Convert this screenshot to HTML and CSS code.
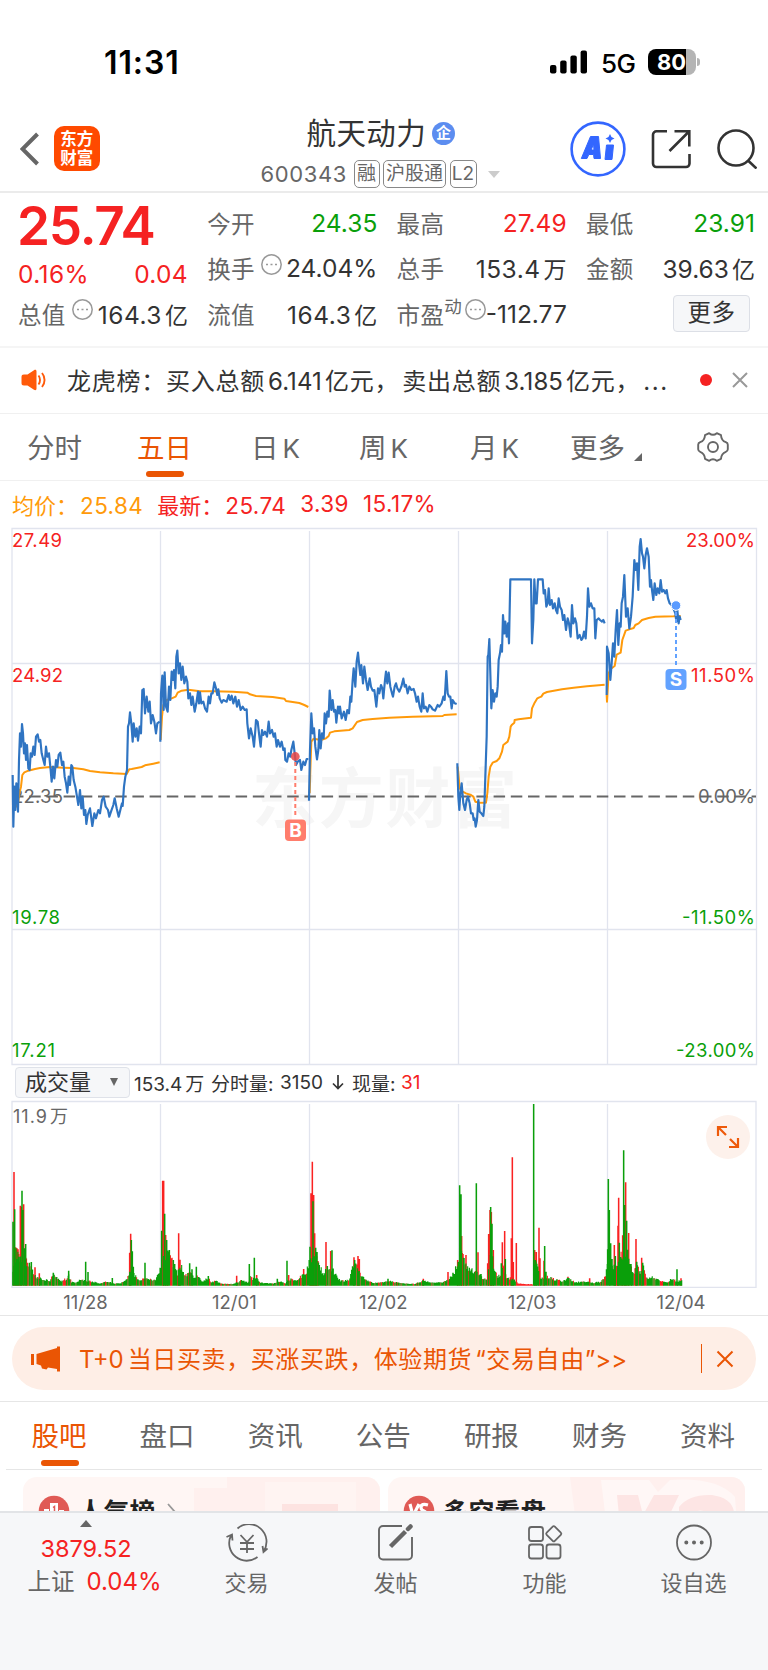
FILE: index.html
```
<!DOCTYPE html>
<html lang="zh-CN">
<head>
<meta charset="utf-8">
<title>航天动力 600343</title>
<link rel="stylesheet" href="styles.css">
</head>
<body>
<main class="screen">
  <div class="status">
    <span class="clock">11:31</span>
    <div class="status-right">
      <svg width="38" height="24" viewBox="0 0 38 24"><rect x="0" y="15" width="6.4" height="8.5" rx="2"/><rect x="10.2" y="10.5" width="6.4" height="13" rx="2"/><rect x="20.4" y="5.5" width="6.4" height="18" rx="2"/><rect x="30.6" y="0.5" width="6.4" height="23" rx="2"/></svg>
      <span class="net">5G</span>
      <div class="battery"><span>80</span></div><i class="nub"></i>
    </div>
  </div>

  <header class="header">
    <svg class="back" width="20" height="34" viewBox="0 0 20 34"><path d="M17.5 2 2.5 17l15 15" fill="none" stroke="#666" stroke-width="4"/></svg>
    <div class="logo"><span>东方</span><span>财富</span></div>
    <div class="heading">
      <div class="name">航天动力<span class="corp">企</span></div>
      <div class="code"><span class="num">600343</span><b class="tag t1">融</b><b class="tag t2">沪股通</b><b class="tag t3">L2</b><i class="caret"></i></div>
    </div>
    <div class="actions">
      <svg width="56" height="56" viewBox="0 0 56 56"><circle cx="28" cy="28" r="26.4" fill="none" stroke="#36f" stroke-width="2.6"/><path fill="#36f" stroke="#36f" stroke-width="1" stroke-linejoin="round" fill-rule="evenodd" d="M20.5 15.5h8l2 22h-6.500l-.4-4h-4.800l-1.800 4h-5.700zM23.500 23l-2.300 6h2.800zM36.500 24h7l-1.500 14.500h-7z"/><path fill="#36f" d="M40 13l1.500 3 3 1.500-3 1.500-1.500 3-1.500-3-3-1.500 3-1.500z"/></svg>
      <svg width="40" height="40" viewBox="0 0 40 40" fill="none" stroke="#333" stroke-width="2.600"><path d="M16 2.300H5.500a3.500 3.500 0 0 0-3.500 3.500V34.500a3.500 3.500 0 0 0 3.500 3.500H35a3.500 3.500 0 0 0 3.500-3.500V25M23.500 2.300H38.300V17.500M38 2.500 18.500 22"/></svg>
      <svg width="40" height="40" viewBox="0 0 40 40" fill="none" stroke="#333" stroke-width="2.600"><circle cx="19" cy="19" r="17.500"/><path d="M31 31.500l8.500 8"/></svg>
    </div>
  </header>

  <section class="quote">
    <div class="col c1">
      <div class="price">25.74</div>
      <div class="cell red pct"><span>0.16%</span><span>0.04</span></div>
      <div class="cell"><label>总值</label><svg class="dots" viewBox="0 0 21 21"><circle cx="10.500" cy="10.500" r="9.700"/><path d="M5 10.500h2M9.500 10.500h2M14 10.500h2"/></svg><span class="wide">164.3<u>亿</u></span></div>
    </div>
    <div class="col">
      <div class="cell"><label>今开</label><span class="green">24.35</span></div>
      <div class="cell"><label>换手</label><svg class="dots" viewBox="0 0 21 21"><circle cx="10.500" cy="10.500" r="9.700"/><path d="M5 10.500h2M9.500 10.500h2M14 10.500h2"/></svg><span>24.04%</span></div>
      <div class="cell"><label>流值</label><span class="wide">164.3<u>亿</u></span></div>
    </div>
    <div class="col">
      <div class="cell"><label>最高</label><span class="red">27.49</span></div>
      <div class="cell"><label>总手</label><span class="wide">153.4<u>万</u></span></div>
      <div class="cell"><label>市盈</label><sup>动</sup><svg class="dots" viewBox="0 0 21 21"><circle cx="10.500" cy="10.500" r="9.700"/><path d="M5 10.500h2M9.500 10.500h2M14 10.500h2"/></svg><span class="pe">-112.77</span></div>
    </div>
    <div class="col">
      <div class="cell"><label>最低</label><span class="green">23.91</span></div>
      <div class="cell"><label>金额</label><span>39.63<u>亿</u></span></div>
      <div class="cell"><button class="more">更多</button></div>
    </div>
  </section>

  <section class="news">
    <svg width="26" height="22" viewBox="0 0 26 22"><path fill="#ff5a0a" d="M3 5.500h3.500L13 1.200c1.500-.8 2.500-.3 2.500 1.300v17c0 1.600-1 2.100-2.500 1.300L6.500 16.500H3c-1.800 0-2.500-.8-2.500-2.500V8c0-1.700.7-2.500 2.500-2.500z"/><path d="M17.500 6.500c2 2.500 2 6.500 0 9M21 4c3.400 4 3.400 10 0 14" fill="none" stroke="#ff5a0a" stroke-width="1.900"/></svg>
    <p>龙虎榜：买入总额<u>6.141</u>亿元，<s></s>卖出总额<u>3.185</u>亿元，<em>...</em></p>
    <i class="dot"></i>
    <svg width="16" height="16" viewBox="0 0 16 16"><path d="M1 1l14 14M15 1 1 15" stroke="#999" stroke-width="2"/></svg>
  </section>

  <nav class="tabs">
    <a>分时</a><a class="on">五日</a><a>日<u>K</u></a><a>周<u>K</u></a><a>月<u>K</u></a><a>更多<i></i></a>
    <svg width="32" height="32" viewBox="0 0 32 32" fill="none" stroke="#666" stroke-width="1.900"><circle cx="16" cy="16" r="5"/><path stroke-linejoin="round" d="M12.200 2.200Q16 5.500 19.800 2.200L24 4.200Q24.300 9.500 28.800 11.200Q31 12 30.800 14V18Q31 20 28.800 20.800Q24.300 22.500 24 27.800L19.800 29.800Q16 26.500 12.200 29.800L8 27.800Q7.700 22.500 3.200 20.800Q1 20 1.200 18V14Q1 12 3.200 11.200Q7.700 9.500 8 4.200Z"/></svg>
  </nav>

  <div class="legend"><span class="avg">均价：<b>25.84</b></span><span>最新：<b>25.74</b></span><b>3.39</b><b>15.17%</b></div>

  <svg class="chart" width="768" height="540" viewBox="0 526 768 540">
    <text x="252" y="822" class="watermark" textLength="265">东方财富</text>
    <g class="grid"><path d="M12 528.500H756.500V1064.500H12zM12 663.500H756M12 929.500H756M160.500 531V1064M309.500 531V1064M458.500 531V1064M607.500 531V1064"/></g>
    <g class="axis">
      <text x="12" y="547" class="up" textLength="50">27.49</text>
      <text x="12" y="681.500" class="up" textLength="51">24.92</text>
      <text x="12" y="803" textLength="51">22.35</text>
      <text x="12" y="924" class="down" textLength="48">19.78</text>
      <text x="12" y="1057" class="down" textLength="43">17.21</text>
      <text x="686" y="547" class="up" textLength="69">23.00%</text>
      <text x="691" y="681.500" class="up" textLength="64">11.50%</text>
      <text x="698" y="803" textLength="57">0.00%</text>
      <text x="682" y="924" class="down" textLength="73">-11.50%</text>
      <text x="676" y="1057" class="down" textLength="79">-23.00%</text>
    </g>
    <path d="M12 796.400H756" stroke="#666" stroke-width="2" stroke-dasharray="11.500 5.700"/>
    <g transform="translate(0 520) scale(.33333)" fill="none" stroke-linejoin="round">
      <g stroke="#ff9a0a" stroke-width="6">
        <path d="M47 862 55 845 58 820 63 800 67 765 73 757 85 752 105 747 120 744 150 741 190 743 220 744 250 748 270 753 300 757 340 760 380 762 388 748 395 747 425 741 435 736 460 731 479 727"/>
        <path d="M482 660 486 590 490 555 500 540 515 535 527 530 533 518 545 512 565 509 600 514 640 514 700 515 742 518 750 523 768 528 818 531 853 536 858 543 898 549 913 555 925 561"/>
        <path transform="translate(768)" d="M161 820 163 750 166 665 173 656 195 660 210 655 218 648 222 638 235 634 280 630 290 625 303 606 320 600 350 597 400 593 470 590 560 588 565 585 602 583"/>
        <path transform="translate(768)" d="M605 740 607 760 611 805 620 815 630 820 645 825 652 830 658 845 670 848 690 848 694 820 698 770 703 740 710 728 722 723 730 715 738 695 742 675 755 665 760 650 764 620 768 614 775 608 776 600 788 598 825 593 828 565 836 548 844 535 850 532 856 530 862 521 873 516 918 508 953 503 993 499 1046 494"/>
        <path transform="translate(1536)" d="M284 525 285 545 290 460 295 448 308 438 314 404 326 398 331 360 341 332 352 328 365 324 370 315 380 310 390 300 410 294 430 290 485 289 506 288"/>
      </g>
      <g stroke="#2f74c2" stroke-width="6.500">
        <path d="M38 765 40 920 43 800 46 870 49 790 52 810 54 875 57 720 60 640 63 680 66 612 69 640 72 700 75 670 78 720 81 675 85 745 89 750 92 700 96 710 100 680 104 705 108 650 113 643 117 665 121 660 125 700 130 720 134 735 138 680 142 710 147 700 151 740 155 785 159 740 163 775 168 720 172 740 176 705 181 698 186 735 190 725 194 770 198 790 202 818 206 770 210 795 214 735 217 740 221 780 226 800 231 830 235 855 240 810 244 865 248 830 252 885 256 870 259 912 263 885 270 865 277 918 283 880 288 895 295 870 300 880 306 840 311 830 317 860 324 870 328 890 333 875 340 855 344 835 350 865 356 890 361 870 366 850 368 858 372 800 376 770 381 750 384 620 387 610 390 577 394 610 398 665 401 610 406 650 410 625 414 662 419 620 423 640 427 510 431 507 435 580 440 530 445 575 449 545 453 610 458 585 463 605 468 640 472 610 479 605"/>
        <path d="M481 665 483 520 487 467 491 570 494 457 498 560 503 575 507 500 511 540 515 455 519 480 522 450 526 505 529 410 532 392 536 460 540 430 544 480 548 440 553 490 558 470 562 485 565 535 570 520 574 555 578 530 584 575 589 550 594 515 597 550 600 517 604 550 610 545 615 565 621 575 626 530 630 550 634 520 638 520 643 487 648 505 652 525 655 508 659 535 665 548 670 540 680 545 686 525 690 540 695 527 700 550 706 530 711 560 716 540 722 570 728 560 734 570 740 568 742 610 747 655 752 625 758 650 762 680 766 630 768 600 773 605 777 640 782 680 786 630 790 645 795 635 801 650 806 605 810 640 816 630 821 650 825 640 830 680 834 660 840 680 845 665 850 690 854 685 856 720 861 725 866 700 871 710 874 690 880 665 884 700 888 735 893 725 900 720 904 750 910 725 915 735 920 717 925 717"/>
        <path transform="translate(768)" d="M159 842 162 690 166 580 170 640 174 625 178 680 183 718 187 690 190 630 194 685 198 640 203 655 206 580 210 610 214 575 218 590 221 512 226 570 230 540 234 575 238 570 241 608 246 560 250 580 252 560 257 595 264 575 269 600 274 570 279 580 283 530 286 545 290 480 293 445 298 500 302 425 306 398 310 440 313 465 316 435 321 490 325 440 330 480 335 510 341 475 345 500 350 512 355 510 361 560 366 505 370 520 375 495 379 505 382 535 387 480 390 455 394 490 398 458 403 500 408 520 411 530 416 500 420 490 424 505 430 515 436 500 442 476 446 500 450 495 455 520 460 500 466 510 473 507 477 520 482 545 486 530 491 560 496 575 500 520 504 565 509 560 514 575 520 555 525 560 530 568 537 572 545 555 550 560 557 550 562 530 566 540 571 453 575 520 579 530 583 530 587 565 590 540 596 550 602 552"/>
        <path transform="translate(768)" d="M604 730 607 830 610 870 613 820 617 790 622 850 627 870 632 840 636 830 641 850 645 880 650 880 653 900 656 895 659 920 663 900 667 840 671 875 676 880 682 888 685 860 688 770 692 650 695 410 697 405 700 357 703 460 706 565 710 510 714 545 718 520 722 530 725 500 728 420 732 400 735 375 738 395 741 285 745 340 748 305 752 350 756 310 759 370 763 178 825 178 828 370 832 300 835 178 839 250 842 250 846 178 860 178 863 220 867 210 871 260 875 250 878 205 882 255 887 240 891 265 896 250 900 270 904 280 908 235 912 260 917 270 921 300 925 285 930 330 935 295 939 310 944 350 948 255 952 310 957 295 961 310 965 355 971 345 976 360 980 355 984 335 989 355 993 290 996 205 1000 260 1005 250 1010 265 1015 265 1018 355 1022 300 1028 295 1032 300 1038 305 1042 300 1046 310"/>
        <path transform="translate(1536)" d="M284 525 285 380 290 400 295 480 299 430 303 370 307 410 311 330 315 270 319 375 323 310 326 320 329 250 333 230 337 165 342 290 347 265 352 325 357 290 362 230 367 120 371 150 375 130 379 210 383 80 386 57 390 100 393 110 397 145 401 105 405 85 410 110 414 200 417 180 420 210 424 240 428 190 433 225 437 205 442 220 446 180 450 215 455 210 460 220 464 210 468 235 473 250 478 255 484 265 490 280 493 305 496 270 500 310 503 290 506 300"/>
      </g>
    </g>
    <path d="M295.300 762V818" stroke="#ff7d6c" stroke-width="2" stroke-dasharray="4 3"/>
    <circle cx="295.300" cy="756.500" r="4.400" fill="#e84545" opacity=".85"/>
    <rect x="285" y="819.500" width="21" height="21.500" rx="4" fill="#ff7d6c"/>
    <text x="295.500" y="837" class="mark">B</text>
    <path d="M676 612V668" stroke="#62a2ff" stroke-width="2" stroke-dasharray="4 3"/>
    <circle cx="676" cy="605.500" r="4.800" fill="#5a9bff" stroke="#fff" stroke-width="1"/>
    <rect x="665.500" y="669" width="21" height="21" rx="4" fill="#62a2ff"/>
    <text x="676" y="686.200" class="mark">S</text>
  </svg>

  <div class="vol-head">
    <div class="select">成交量<i></i></div>
    <span class="v1">153.4<u>万</u></span><span class="v2">分时量:</span><span class="v3">3150</span><svg width="12" height="18" viewBox="0 0 12 18"><path d="M6 2v13.500M1 10.500l5 5 5-5" fill="none" stroke="#333" stroke-width="1.700"/></svg><span class="v4">现量:</span><span class="v5">31</span>
  </div>

  <div class="volume">
    <svg width="768" height="188" viewBox="0 1100 768 188">
      <g class="grid"><path d="M12 1101.500H756V1287.500H12zM160.500 1104V1286M309.500 1104V1286M458.500 1104V1286M607.500 1104V1286"/></g>
      <g id="bars"></g>
      <text x="13" y="1122.500" class="vmax" textLength="34">11.9</text><text x="50" y="1122.500" class="vmax">万</text>
    </svg>
    <div class="expand"><svg width="24" height="24" viewBox="0 0 24 24" fill="none" stroke="#ee5a0a" stroke-width="2.200"><path d="M2 11V2h9M2.500 2.500 10 10M22 13v9h-9M21.500 21.500 14 14"/></svg></div>
  </div>
  <div class="dates"><span>11/28</span><span>12/01</span><span>12/02</span><span>12/03</span><span>12/04</span></div>

  <div class="promo-wrap"><div class="promo">
    <svg width="30" height="26" viewBox="0 0 30 26"><path fill="#ea5504" d="M0 8h3v11H0zM5.500 8 26 2V.500h3v25h-3V23l-9-1.500-1.500 2-4.500-1-1-3-4.500-1.500z"/></svg>
    <p><u>T+0</u>当日买卖，买涨买跌，体验期货<q class="l">“</q>交易自由<q class="r">”&gt;&gt;</q></p>
    <i></i>
    <svg width="18" height="18" viewBox="0 0 18 18"><path d="M1.500 1.500l15 15M16.500 1.500l-15 15" stroke="#ea5504" stroke-width="2"/></svg>
  </div></div>

  <nav class="tabs2"><a class="on">股吧</a><a>盘口</a><a>资讯</a><a>公告</a><a>研报</a><a>财务</a><a>资料</a></nav>

  <section class="cards">
    <div class="card">
      <svg class="deco" width="357" height="60" viewBox="0 0 357 60"><path fill="#fff0ee" d="M171 11h33V0h153v60H171z"/><path fill="#fff4f2" d="M242 5h91v55h-91z"/><path fill="#fde3e1" d="M259 27h56v33h-56z"/></svg>
      <svg class="ico" width="32" height="32" viewBox="0 0 32 32"><circle cx="16" cy="16" r="15.300" fill="#e05a55"/><path fill="#fff" d="M12 8h8v16h-8zM6 14h5v10H6zM21 15h5v9h-5z"/><path d="M15 12.500l1.500-1v7" stroke="#e05a55" fill="none" stroke-width="1.500"/></svg>
      <strong>人气榜</strong>
      <svg class="chev" width="10" height="18" viewBox="0 0 10 18"><path d="M1 1l7 8-7 8" fill="none" stroke="#999" stroke-width="1.800"/></svg>
    </div>
    <div class="card">
      <svg class="deco" width="357" height="60" viewBox="0 0 357 60"><path fill="#fff0ee" d="M182 0H357V60H190z"/><path fill="#fff7f6" d="M213 3h48l9 12 12-12Q330 0 347 20L350 60H220z"/><path fill="#fde5e4" d="M229 18h21l5 20 11-20h25l-20 42H233zM291 30q10-13 33-12 20 3 22 17h-28q-8-4-11 2l8 20h-24z"/></svg>
      <svg class="ico" width="32" height="32" viewBox="0 0 32 32"><circle cx="16" cy="16" r="15.300" fill="#e05a55"/><path d="M7 9l3 12 6-12M25 10q-7-2-7 2.500 0 2.500 3 3.500t1 4.500q-2 1.500-6 0" fill="none" stroke="#fff" stroke-width="3.200"/></svg>
      <strong>多空看盘</strong>
    </div>
  </section>

  <footer class="bottom">
    <div class="index"><i></i><b>3879.52</b><div>上证<b>0.04%</b></div></div>
    <a><svg width="42" height="38" viewBox="0 0 42 38" fill="none" stroke="#666" stroke-width="1.800"><path d="M11.500 4.500A17.500 17.500 0 0 1 37.500 27.500M31.500 33A17.500 17.500 0 0 1 5 11.500M.500 13l5.500-2.500 .5 6M36.500 22l1 6 4-3.500M14.500 11l6.500 7 6.500-7M21 18v11M14 19h14M14 25h14"/></svg>交易</a>
    <a><svg width="38" height="38" viewBox="0 0 38 38" fill="none" stroke="#666" stroke-width="1.900"><path d="M25 2H6a4 4 0 0 0-4 4V31.500a4 4 0 0 0 4 4H31a4 4 0 0 0 4-4V13"/><path d="M13.500 22.500 28.500 7.500" stroke-width="4.500"/><path d="M31 5l2.500-2.500" stroke-width="4.500" stroke-linecap="round"/></svg>发帖</a>
    <a><svg width="38" height="38" viewBox="0 0 38 38" fill="none" stroke="#666" stroke-width="1.800"><rect x="3" y="3" width="14" height="14" rx="2.500"/><rect x="3" y="20.500" width="14" height="14" rx="2.500"/><rect x="20.500" y="20.500" width="14" height="14" rx="2.500"/><rect x="22" y="4" width="11.500" height="11.500" rx="1.500" transform="rotate(45 27.750 9.750)"/></svg>功能</a>
    <a><svg width="38" height="38" viewBox="0 0 38 38" fill="none" stroke="#666" stroke-width="1.800"><circle cx="19" cy="18.500" r="17"/><path d="M11.300 18.500h.01M19 18.500h.01M26.700 18.500h.01" stroke-width="4" stroke-linecap="round"/></svg>设自选</a>
  </footer>
</main>
<script src="volume.js"></script>
</body>
</html>
```
FILE: styles.css
```
* { box-sizing: border-box; }
body { margin: 0; background: #fff; }
u, i, em, q, s { text-decoration: none; font-style: normal; quotes: none; }
q::before, q::after { content: none; }
svg { display: block; flex: none; }
.screen { width: 768px; height: 1670px; overflow: hidden; display: flex; flex-direction: column; font-family: Inter, "Noto Sans CJK SC", sans-serif; font-weight: 400; color: #333; }
.screen > * { flex: none; }
.red { color: #f52222; }
.green { color: #0a9f0a; }

.status { height: 106px; display: flex; justify-content: space-between; padding: 18px 68px 0 104px; align-items: center; color: #000; }
.clock { font-size: 32px; font-weight: 600; letter-spacing: .9px; }
.status-right { display: flex; align-items: center; }
.net { font-size: 26px; margin: 2px 14px 0 13px; width: 33px; letter-spacing: -.6px; font-weight: 500; }
.battery { width: 48px; height: 26px; border-radius: 8px; background: linear-gradient(90deg, #000 38px, #b4b4b4 38px); color: #fff; font-size: 22px; font-weight: 700; line-height: 26px; padding-left: 9px; letter-spacing: 0; }
.nub { width: 3px; height: 8px; border-radius: 0 4px 4px 0; background: #b4b4b4; margin-left: 1px; }

.header { height: 87px; border-bottom: 2px solid #ebebeb; display: flex; align-items: center; padding: 0 12px 0 20px; }
.logo { width: 45.500px; height: 45.500px; margin-left: 14px; border-radius: 10px; background: #ff4a00; color: #fff; font-weight: 700; font-size: 16.500px; line-height: 19px; display: flex; flex-direction: column; align-items: center; justify-content: center; }
.heading { margin-left: 161px; width: 244px; align-self: stretch; padding-top: 5px; }
.name { display: flex; align-items: center; justify-content: flex-start; font-size: 29.500px; line-height: 44px; letter-spacing: .4px; padding-left: 46px; }
.corp { width: 23px; height: 23px; border-radius: 50%; background: #5c8df0; color: #fff; font-size: 15px; font-weight: 700; line-height: 22px; text-align: center; margin-left: 6px; letter-spacing: 0; }
.code { display: flex; align-items: center; color: #666; height: 28px; margin-top: 5px; }
.num { font-size: 22px; width: 93px; letter-spacing: .6px; }
.tag { border: 1.500px solid #888; border-radius: 5px; font-weight: 400; font-size: 19px; line-height: 25px; height: 28px; text-align: center; margin-right: 3.500px; white-space: nowrap; }
.t1 { width: 26px; } .t2 { width: 63px; } .t3 { width: 27px; font-size: 19px; }
.caret { border: 6.500px solid transparent; border-top: 7px solid #ccc; border-bottom: 0; margin-left: 8px; }
.actions { margin-left: auto; display: flex; align-items: center; }
.actions svg:nth-child(2) { margin-left: 25px; }
.actions svg:nth-child(3) { margin-left: 26px; margin-right: -1px; }

.quote { height: 155px; border-bottom: 2px solid #f5f5f5; padding: 7px 12px 0 18px; display: grid; grid-template-columns: 170px 170px 170px 169px; column-gap: 19.300px; }
.cell { height: 45.500px; display: flex; align-items: center; font-size: 24.500px; position: relative; white-space: nowrap; }
.cell label { font-size: 23.500px; color: #666; letter-spacing: .3px; }
.cell span { margin-left: auto; }
.cell .wide { letter-spacing: .5px; }
.cell u { font-size: 23px; margin-left: 3px; letter-spacing: 0; }
.dots { width: 21px; height: 21px; fill: none; stroke: #999; stroke-width: 1.500; margin: -8px 0 0 6px; }
.cell .pe { margin-right: 0; }
.price { font-size: 53px; font-weight: 600; color: #f52222; line-height: 53px; height: 54px; letter-spacing: -1.200px; margin-left: -1px; }
.c1 .pct { height: 37px; padding-top: 2px; }
.pct span:first-child { margin-left: 0; letter-spacing: .4px; }
.pct span:last-child { letter-spacing: .3px; }
.cell sup { font-size: 17.500px; color: #666; align-self: flex-start; line-height: 1; margin: 7px 0 0 0; }
.cell sup + .dots { margin-left: 3px; }
.more { margin: -1px 5px 0 auto; width: 77px; height: 37px; border: 1.500px solid #dcdfe6; border-radius: 4px; background: #f6f7f9; font: 23.500px/30px Inter, "Noto Sans CJK SC", sans-serif; color: #333; padding: 0; letter-spacing: .4px; }

.news { height: 66px; border-bottom: 1px solid #f0f0f0; display: flex; align-items: center; padding: 0 20px 2px 21px; }
.news p { margin: 0 0 0 20px; width: 633px; font-size: 24px; letter-spacing: .75px; white-space: nowrap; }
.news u { margin: 0 3px; letter-spacing: .1px; }
.news s { margin-left: 3px; }
.news em { margin-left: 3px; letter-spacing: 1.500px; }
.dot { width: 12px; height: 12px; border-radius: 50%; background: #f52222; margin-right: auto; }

.tabs { height: 67px; border-bottom: 1px solid #f0f0f0; display: flex; align-items: center; position: relative; color: #666; font-size: 27.500px; padding: 0 39px 0 27px; }
.tabs a { position: relative; line-height: 60px; height: 59px; white-space: nowrap; width: 110px; }
.tabs a:nth-child(2) { width: 114px; } .tabs a:nth-child(3) { width: 108px; } .tabs a:nth-child(4) { width: 111px; } .tabs a:nth-child(5) { width: 100px; } .tabs a:nth-child(6) { width: 127px; }
.tabs u { margin-left: 4px; font-size: 26px; }
.tabs .on, .tabs2 .on { color: #ea5504; }
.tabs .on::after, .tabs2 .on::after { content: ""; position: absolute; left: 9px; bottom: 0; width: 38px; height: 6px; border-radius: 3px; background: #ea5504; }
.tabs i { display: inline-block; border-left: 8px solid transparent; border-bottom: 8px solid #666; margin-left: 9px; transform: translateY(3px); }

.legend { height: 45px; padding: 0 12px; display: flex; align-items: center; color: #f52222; font-size: 22px; white-space: nowrap; }
.legend b { font-weight: 400; font-size: 22.500px; letter-spacing: .4px; }
.legend span b { margin-left: 2px; }
.legend .avg { color: #ff9a0a; }
.legend > * { margin-right: 14px; }

.chart { overflow: hidden; }
.grid path { fill: none; stroke: #e1e4ee; stroke-width: 1.300; }
.watermark { font-size: 65px; font-weight: 700; fill: #f6f6f6; }
.axis text { font-size: 18.500px; fill: #666; }
.axis .up { fill: #f52222; }
.axis .down { fill: #0a9f0a; }
.mark { font-size: 19px; font-weight: 700; fill: #fff; text-anchor: middle; }

.vol-head { height: 34px; padding: 0 0 2px 15px; display: flex; align-items: center; font-size: 19px; white-space: nowrap; }
.select { width: 115px; height: 31px; border: 1.500px solid #dfe2e9; border-radius: 4px; background: #f6f7f9; font-size: 22px; line-height: 28px; padding-left: 9px; display: flex; align-items: center; }
.select i { border: 4.500px solid transparent; border-top: 8px solid #666; border-bottom: 0; margin-left: 19px; }
.vol-head u { margin-left: 3px; }
.v1 { width: 77px; margin-left: 4px; } .v2 { width: 69px; } .v3 { width: 52px; } .v4 { margin-left: 8px; width: 49px; } .v5 { color: #f52222; }
.volume { position: relative; height: 188px; }
.vmax { font-size: 18px; fill: #666; }
.expand { position: absolute; right: 18px; top: 15px; width: 44px; height: 44px; border-radius: 50%; background: #fdf1eb; display: flex; align-items: center; justify-content: center; }
.dates { height: 28px; border-bottom: 1px solid #e6e6e6; display: grid; grid-template-columns: repeat(5, 148.900px); padding-left: 11px; text-align: center; color: #666; font-size: 18.500px; line-height: 28px; }

.promo-wrap { height: 86px; padding: 11px 12px 0; border-bottom: 1.500px solid #e6e6e6; }
.promo { height: 63px; border-radius: 32px; background: #feeee6; color: #ea5504; display: flex; align-items: center; padding: 0 22px 0 19px; }
.promo p { margin: -2px 0 0 18px; font-size: 24px; letter-spacing: .6px; white-space: nowrap; flex: 1; }
.promo u { margin-right: 4px; letter-spacing: 0; }
.promo .l { margin-left: 3px; }
.promo .r { letter-spacing: 0; }
.promo i { width: 1.500px; height: 29px; background: #ea5504; margin-right: 14px; }

.tabs2 { height: 68px; margin: 0 6px; padding-left: 25.500px; border-bottom: 1.500px solid #e6e6e6; display: grid; grid-template-columns: repeat(7, 108.100px); color: #666; font-size: 27.500px; line-height: 69px; }
.tabs2 a { position: relative; height: 66px; }
.tabs2 .on::after { bottom: 2px; }

.cards { height: 41px; overflow: hidden; padding: 7px 23px 0; display: flex; gap: 8px; }
.card { position: relative; flex: 1; height: 100px; border-radius: 14px; background: #fff6f4; overflow: hidden; display: flex; align-items: flex-start; padding: 18px 15px; }
.deco { position: absolute; left: 0; top: 0; }
.ico { position: relative; }
.card strong { position: relative; font-size: 25.500px; line-height: 36px; margin: -1px 0 0 8px; color: #222; letter-spacing: .3px; }
.chev { position: relative; margin: 8px 0 0 12px; }

.bottom { flex: 1 0 auto !important; border-top: 2px solid #e2e4e7; background: #f6f7f9; display: flex; color: #666; font-size: 22px; padding-left: 11px; }
.bottom a { width: 149px; padding-top: 11px; display: flex; flex-direction: column; align-items: center; line-height: 42px; }
.index { width: 161px; padding-top: 7px; display: flex; flex-direction: column; align-items: center; padding-right: 11px; line-height: 34px; white-space: nowrap; }
.index b { color: #f52222; font-weight: 400; font-size: 23.500px; }
.index div { font-size: 23.500px; padding-left: 17px; margin-top: -1px; }
.index div b { margin-left: 12px; font-size: 24px; }
.index i { border: 6.500px solid transparent; border-bottom: 7px solid #666; border-top: 0; margin-bottom: 5px; }
```
FILE: volume.js
```
// Samples are "position:height" in third-pixels above the baseline; the suffix gives the bar's direction.
const FLOOR = 677;
const base = "37 640 49 580 58 590 80 600 90 625 110 652 125 658 150 662 160 645 180 662 200 658 206 645 214 666 228 668 240 660 270 664 300 670 318 665 345 671 365 669 380 658 388 640 402 640 412 660 440 658 460 660 470 655 480 627 486 600 505 585 520 612 532 640 545 620 552 645 570 642 583 652 590 645 605 665 625 655 635 668 648 662 665 672 700 672 725 662 745 668 752 645 758 658 765 650 780 668 800 670 825 670 845 664 855 671 870 658 890 661 900 652 912 645 920 635 928 600 950 600 960 626 972 642 985 620 1000 633 1012 650 1020 662 1048 662 1058 620 1068 618 1083 645 1095 660 1120 668 1152 668 1164 662 1192 668 1242 672 1270 662 1302 669 1332 666 1350 655 1362 645 1376 590 1390 588 1400 622 1420 634 1436 640 1449 660 1460 655 1468 600 1478 600 1484 640 1500 652 1510 615 1520 650 1532 657 1545 662 1555 671 1598 673 1604 610 1614 615 1620 655 1636 652 1645 650 1662 658 1690 664 1704 656 1727 668 1752 664 1777 669 1800 666 1815 650 1825 605 1850 625 1860 590 1876 575 1886 590 1892 622 1902 636 1910 610 1920 640 1928 615 1934 640 1945 659 1957 650 1972 660 2002 668 2014 657 2030 664 2046 661".split(" ").map(Number);
const spikes = "39:485g 42:336r 44:448g 47:562r 51:565r 54:568r 57:590g 61:437r 64:440r 66:392g 69:450g 71:433r 74:565g 77:552g 80:619g 88:608g 94:606g 105:622r 118:640r 160:638g 206:632g 257:605g 264:636g 337:654g 389:578r 392:521r 394:540g 397:574g 400:620g 435:608g 485:512g 488:362r 491:362r 494:461g 497:525r 500:540g 503:590r 508:570g 515:595r 520:600g 524:612g 536:520r 540:599r 569:610g 576:628g 589:620g 625:648g 710:647r 748:612g 763:593g 770:645r 832:656g 861:602g 866:645r 911:627r 930:560g 933:400r 937:305r 939:424g 941:405r 944:520r 947:563g 951:576g 954:603r 978:546r 982:618g 992:573r 996:571g 1062:592r 1064:600g 1074:588r 1078:597r 1164:656g 1270:656r 1344:636r 1359:638g 1373:600r 1379:376g 1383:403g 1385:528r 1389:582r 1398:585r 1429:370g 1434:577r 1443:642g 1463:610r 1466:522r 1470:450r 1472:441g 1474:456r 1476:491g 1480:570r 1504:610g 1507:547r 1514:513r 1516:597g 1534:535r 1537:292r 1540:606r 1549:549r 1601:132g 1604:570r 1606:600g 1609:576r 1617:503r 1620:595r 1632:602r 1634:558g 1638:635g 1704:650r 1769:655r 1823:568g 1825:357g 1828:450g 1832:550g 1836:597g 1843:555r 1846:588g 1854:497r 1856:413r 1858:548g 1862:591g 1868:526r 1871:271g 1874:435g 1877:367r 1880:482g 1883:569g 1886:519r 1893:612g 1908:537r 1910:605g 1925:593r 1928:608g 2031:628g 2043:655r".split(" ");

const rand = n => { const v = Math.sin(n * 12.9898) * 43758.5453; return v - Math.floor(v); };
const paths = { r: "", g: "" };
const bar = (x, y, c, w) => { paths[c] += `M${x - w / 2} ${y}h${w}V${FLOOR}h${-w}z`; };

let k = 0;
for (let x = 38; x < 2046; x += 2.6) {
  while (base[k + 2] < x) k += 2;
  const t = (x - base[k]) / (base[k + 2] - base[k]);
  const top = base[k + 1] + (base[k + 3] - base[k + 1]) * t;
  const halted = x > 1550 && x < 1599;
  const y = FLOOR - (FLOOR - top) * (0.8 + rand(x) * 0.4);
  bar(x, y, halted || rand(x + 7) < 0.28 ? "r" : "g", 3.4);
}
for (const s of spikes) {
  const [x, rest] = s.split(":");
  bar(+x, parseInt(rest), rest.slice(-1), 4.6);
}
document.getElementById("bars").innerHTML =
  `<g transform="translate(0 1060) scale(.33333)"><path fill="#fa2222" d="${paths.r}"/><path fill="#0a9f0a" d="${paths.g}"/></g>`;
```
